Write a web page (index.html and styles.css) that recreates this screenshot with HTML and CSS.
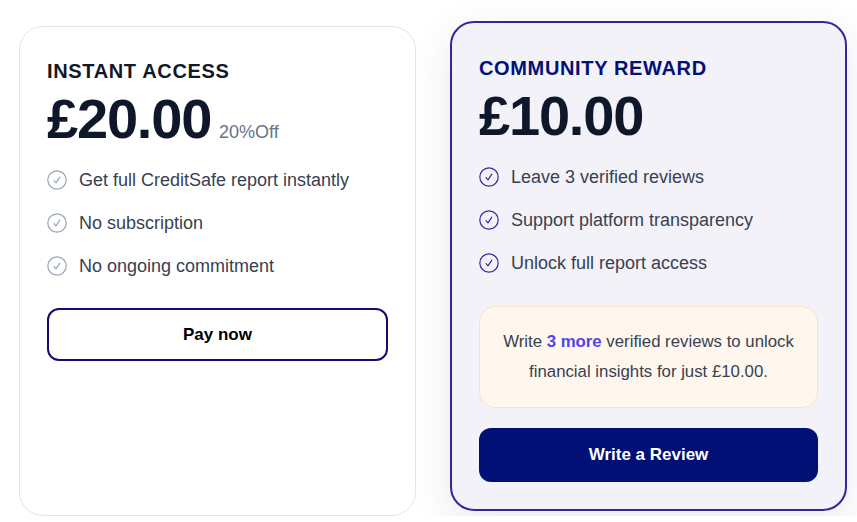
FILE: index.html
```html
<!DOCTYPE html>
<html lang="en">
<head>
<meta charset="utf-8">
<title>Pricing</title>
<link rel="stylesheet" href="styles.css">
</head>
<body>
<main class="plans">
  <section class="card card--plain">
    <h2 class="card__title">INSTANT ACCESS</h2>
    <div class="price-row">
      <span class="price">£20.00</span>
      <span class="price-note">20%Off</span>
    </div>
    <ul class="features features--muted">
      <li><svg class="check" viewBox="0 0 20 20"><circle cx="10" cy="10" r="9.2"/><polyline points="7,10.6 9,12.8 12.8,7.2"/></svg>Get full CreditSafe report instantly</li>
      <li><svg class="check" viewBox="0 0 20 20"><circle cx="10" cy="10" r="9.2"/><polyline points="7,10.6 9,12.8 12.8,7.2"/></svg>No subscription</li>
      <li><svg class="check" viewBox="0 0 20 20"><circle cx="10" cy="10" r="9.2"/><polyline points="7,10.6 9,12.8 12.8,7.2"/></svg>No ongoing commitment</li>
    </ul>
    <button class="btn btn--outline">Pay now</button>
  </section>

  <section class="card card--featured">
    <h2 class="card__title card__title--navy">COMMUNITY REWARD</h2>
    <div class="price-row">
      <span class="price">£10.00</span>
    </div>
    <ul class="features features--accent">
      <li><svg class="check" viewBox="0 0 20 20"><circle cx="10" cy="10" r="9.2"/><polyline points="7,10.6 9,12.8 12.8,7.2"/></svg>Leave 3 verified reviews</li>
      <li><svg class="check" viewBox="0 0 20 20"><circle cx="10" cy="10" r="9.2"/><polyline points="7,10.6 9,12.8 12.8,7.2"/></svg>Support platform transparency</li>
      <li><svg class="check" viewBox="0 0 20 20"><circle cx="10" cy="10" r="9.2"/><polyline points="7,10.6 9,12.8 12.8,7.2"/></svg>Unlock full report access</li>
    </ul>
    <p class="notice">Write <strong>3 more</strong> verified reviews to unlock financial insights for just £10.00.</p>
    <button class="btn btn--solid">Write a Review</button>
  </section>
</main>
</body>
</html>
```
FILE: styles.css
```css
* { box-sizing: border-box; }

html, body {
  margin: 0;
  background: #ffffff;
  font-family: "Liberation Sans", Arial, sans-serif;
}

.plans {
  display: grid;
  grid-template-columns: 397px 397px;
  column-gap: 34px;
  padding: 26px 0 0 19px;
  align-items: stretch;
}

.card {
  display: flex;
  flex-direction: column;
  padding: 30px 27px 27px;
  border-radius: 24px;
}

.card--plain {
  background: #ffffff;
  border: 1px solid #e3e4e8;
}

.card--featured {
  padding-top: 31px;
  background: #f3f2f9;
  border: 2px solid #35249a;
  transform: translateY(-5px);
  box-shadow: 0 12px 40px rgba(40, 30, 100, 0.10);
}

.card__title {
  margin: 0 0 6px;
  font-size: 20px;
  line-height: 28px;
  font-weight: 700;
  letter-spacing: 0.65px;
  color: #111827;
}

.card__title--navy { color: #001178; }

.price-row {
  display: flex;
  align-items: baseline;
  gap: 8px;
}

.price {
  font-size: 56px;
  line-height: 56px;
  font-weight: 700;
  letter-spacing: -1.2px;
  color: #0f172a;
}

.price-note {
  font-size: 18px;
  color: #64748b;
}

.features {
  list-style: none;
  margin: 19px 0 0;
  padding: 0;
  display: flex;
  flex-direction: column;
  gap: 15px;
}

.features li {
  display: flex;
  align-items: center;
  gap: 12px;
  font-size: 18px;
  line-height: 28px;
  color: #374151;
}

.check {
  width: 20px;
  height: 20px;
  flex: none;
  fill: none;
  stroke-width: 1.2;
  stroke-linecap: round;
  stroke-linejoin: round;
}

.features--muted .check { stroke: #9aa6b8; }
.features--accent .check { stroke: #3a2a9c; }

.btn {
  display: flex;
  align-items: center;
  justify-content: center;
  width: 100%;
  font-family: inherit;
  font-size: 17px;
  font-weight: 700;
  border-radius: 12px;
  cursor: pointer;
}

.btn--outline {
  margin-top: 28px;
  height: 53px;
  background: #ffffff;
  color: #000000;
  border: 2px solid #1a0a70;
}

.btn--solid {
  margin-top: 20px;
  height: 54px;
  background: #001075;
  color: #ffffff;
  border: none;
}

.notice {
  margin: 29px 0 0;
  padding: 20px 16px;
  background: #fff7ee;
  border: 1px solid #fbe3c3;
  border-radius: 16px;
  text-align: center;
  font-size: 16.8px;
  line-height: 30px;
  color: #374151;
}

.notice strong { color: #4f46e5; }
```
